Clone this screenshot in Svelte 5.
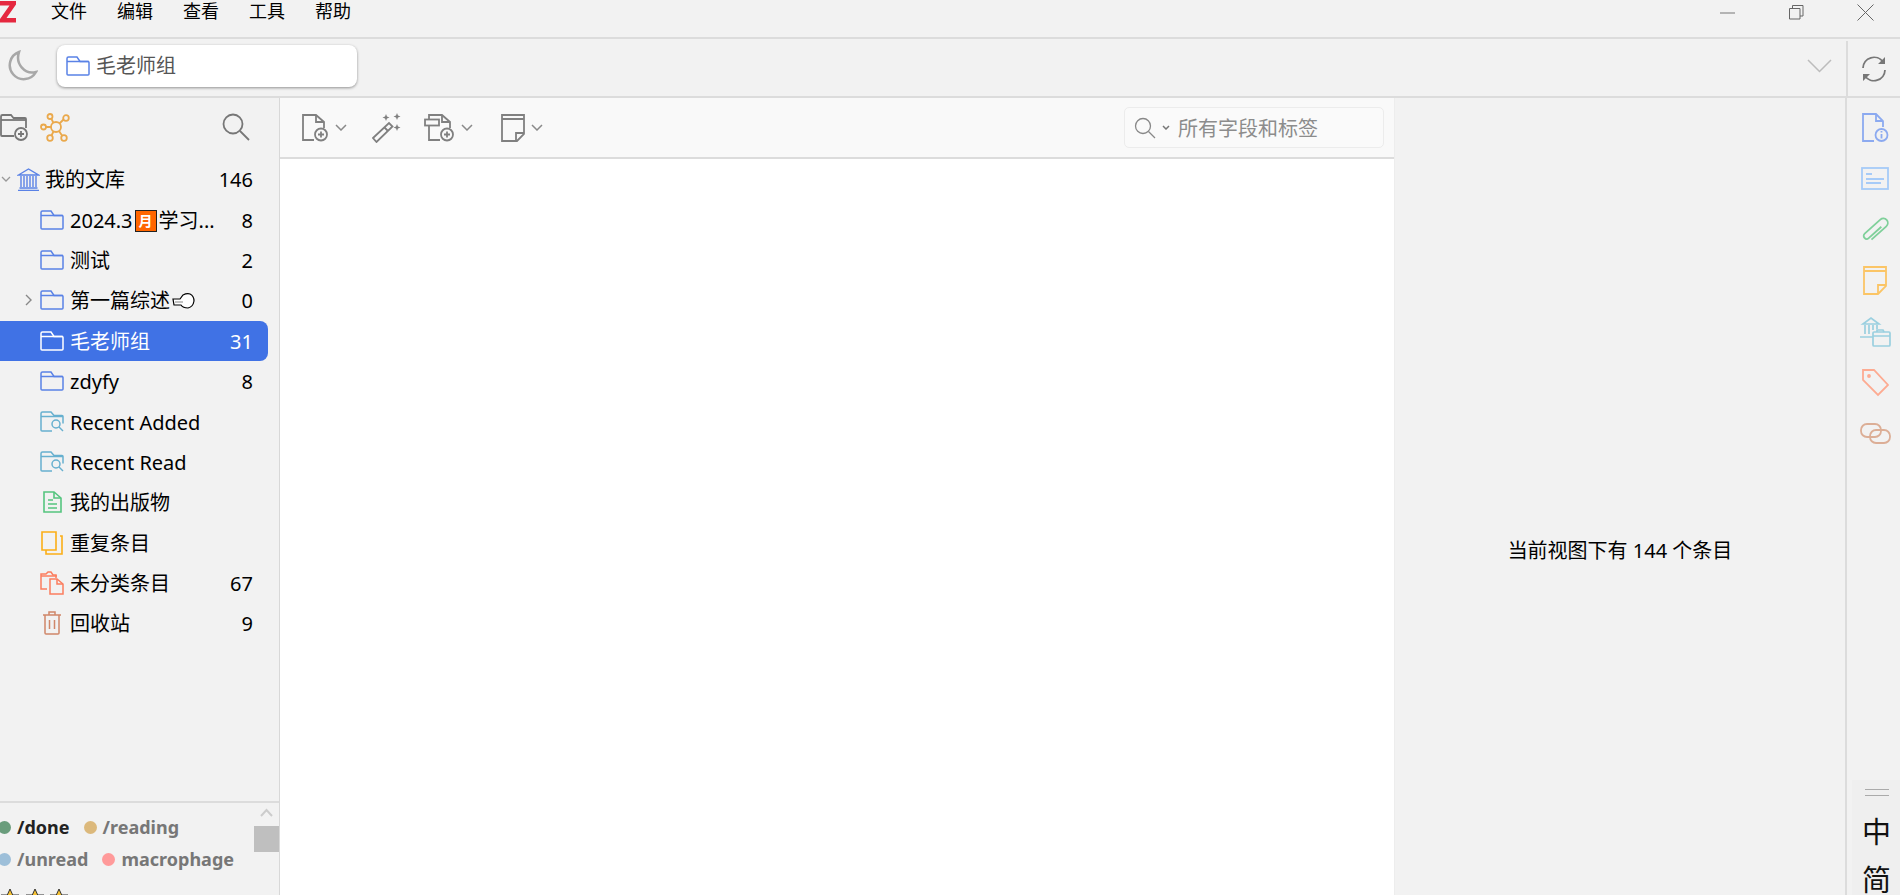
<script>
  const menus = ['文件', '编辑', '查看', '工具', '帮助'];
  const rows = [
    { icon: 'folder', label: '2024.3', badge: '月', after: '学习...', count: 8 },
    { icon: 'folder', label: '测试', count: 2 },
    { icon: 'folder', label: '第一篇综述', hand: true, twisty: true, count: 0 },
    { icon: 'folder', label: '毛老师组', count: 31, selected: true },
    { icon: 'folder', label: 'zdyfy', count: 8 },
    { icon: 'saved', label: 'Recent Added' },
    { icon: 'saved', label: 'Recent Read' },
    { icon: 'pubs', label: '我的出版物' },
    { icon: 'dupes', label: '重复条目' },
    { icon: 'unfiled', label: '未分类条目', count: 67 },
    { icon: 'trash', label: '回收站', count: 9 }
  ];
</script>

{#snippet folder(color)}
  <svg class="ico" width="24" height="20" viewBox="0 0 24 20" fill="none" stroke={color} stroke-width="1.5">
    <path d="M1 5.500V2.500A1.500 1.500 0 0 1 2.500 1H11l3 4.500H22a1 1 0 0 1 1 1V18a1 1 0 0 1-1 1H2a1 1 0 0 1-1-1z" />
    <path d="M1 5.500h22" />
  </svg>
{/snippet}

{#snippet chevron()}
  <svg class="chev" width="12" height="7" viewBox="0 0 12 7" fill="none" stroke="#8a8a8a" stroke-width="1.500"><path d="M1 1l5 5 5-5" /></svg>
{/snippet}

{#snippet rowIcon(row)}
  {#if row.icon === 'folder'}
    {@render folder(row.selected ? '#fff' : '#5a82e6')}
  {:else if row.icon === 'saved'}
    <svg class="ico" width="24" height="22" viewBox="0 0 24 22" fill="none" stroke="#67b0cf" stroke-width="1.500">
      <path d="M12 20H2a1 1 0 0 1-1-1V2.500A1.500 1.500 0 0 1 2.500 1H11l3 3.500H22a1 1 0 0 1 1 1v7" />
      <path d="M1 5.500h22" />
      <circle cx="16" cy="13" r="4" />
      <path d="M19 16l4 4" />
    </svg>
  {:else if row.icon === 'pubs'}
    <svg class="ico" width="24" height="22" viewBox="0 0 24 22" fill="none" stroke="#55c57f" stroke-width="1.600">
      <path d="M4 1h10l7 6v14H4z" />
      <path d="M14 1v6h7M8 9h5M8 13h9M8 17h9" />
    </svg>
  {:else if row.icon === 'dupes'}
    <svg class="ico" width="24" height="24" viewBox="0 0 24 24" fill="none" stroke="#fbae17" stroke-width="1.600">
      <path d="M2 1h14v18H2z" />
      <path d="M20 5h2v18H6v-4" />
    </svg>
  {:else if row.icon === 'unfiled'}
    <svg class="ico" width="24" height="24" viewBox="0 0 24 24" fill="none" stroke="#fb7e5f" stroke-width="1.500">
      <path d="M7 18H1V3h5l2 -2h3l2 3h3v3" />
      <path d="M1 5h16" />
      <path d="M10 8h7l6 5v10H10z" />
      <path d="M17 8v5h6" />
    </svg>
  {:else if row.icon === 'trash'}
    <svg class="ico" width="24" height="24" viewBox="0 0 24 24" fill="none" stroke="#d0876a" stroke-width="1.500">
      <path d="M3 4h18M9 4V1h6v3M5 4v18a1 1 0 0 0 1 1h12a1 1 0 0 0 1-1V4" />
      <path d="M9.500 9v9M14.500 9v9" />
    </svg>
  {/if}
{/snippet}

<div class="app">
  <header class="menubar">
    <svg class="logo" width="17" height="23" viewBox="0 0 17 23"><path fill="#e5283f" d="M0 1h16v3.500L6.500 18h9.500v4.500H0V19L9.500 5.500H0z" /></svg>
    <nav class="menus">
      {#each menus as m}<span>{m}</span>{/each}
    </nav>
    <div class="winbtns">
      <svg width="16" height="2" viewBox="0 0 16 2"><path d="M0 1h15" stroke="#777" stroke-width="1" /></svg>
      <svg width="15" height="15" viewBox="0 0 15 15" fill="none" stroke="#666"><path d="M.5 3.500h10.500v10.500H.5zM3.500 3.500V.5h10.500v10.500h-3" /></svg>
      <svg width="17" height="17" viewBox="0 0 17 17" fill="none" stroke="#666"><path d="M.5.5l16 16M16.500.5l-16 16" /></svg>
    </div>
  </header>

  <div class="tabbar">
    <svg class="moon" width="32" height="32" viewBox="0 0 32 32" fill="none" stroke="#a8a8a8" stroke-width="2.500"><path d="M13 2a14 14 0 1 0 17 20C19 25 9 14 13 2z" /></svg>
    <div class="tab">
      {@render folder('#5a82e6')}
      <span>毛老师组</span>
    </div>
    <svg class="tabs-chev" width="25" height="14" viewBox="0 0 25 14" fill="none" stroke="#bcbcbc" stroke-width="1.500"><path d="M1 1l11.500 11.500L24 1" /></svg>
    <div class="sync">
      <svg width="26" height="26" viewBox="0 0 26 26" fill="none" stroke="#777" stroke-width="1.800">
        <path d="M2 12a11 11 0 0 1 20-6" />
        <path d="M24 14a11 11 0 0 1-20 6" />
        <path fill="#777" stroke="none" d="M24 1v7h-7zM2 25v-7h7z" />
      </svg>
    </div>
  </div>

  <div class="main">
    <aside class="sidebar">
      <div class="side-tools">
        <svg width="29" height="28" viewBox="0 0 29 28" fill="none" stroke="#777" stroke-width="1.800">
          <path d="M14 23H2a1 1 0 0 1-1-1V3.500A1.500 1.500 0 0 1 2.500 2H11l2.500 3H25a1 1 0 0 1 1 1v9" />
          <path d="M1 7h25" />
          <circle cx="21" cy="21" r="6" />
          <path d="M21 18v6M18 21h6" />
        </svg>
        <svg class="net" width="31" height="29" viewBox="0 0 31 29" fill="none" stroke="#eaa94c" stroke-width="1.800">
          <circle cx="16" cy="14" r="5" /><circle cx="10" cy="3.500" r="2.500" /><circle cx="26" cy="5" r="2.800" />
          <circle cx="3.500" cy="14" r="2.500" /><circle cx="10" cy="25" r="2.800" /><circle cx="24" cy="25" r="2.800" />
          <path d="M11.500 6l2 4M23.500 6.500l-4 4M6 14h5M11.500 22.500l2-4M22 22.500l-3-4.500" />
        </svg>
        <svg class="find" width="28" height="28" viewBox="0 0 28 28" fill="none" stroke="#777" stroke-width="1.800"><circle cx="11" cy="11" r="9.500" /><path d="M18 18l9 9" /></svg>
      </div>

      <div class="tree">
        <div class="row lib">
          <svg class="twist-open" width="10" height="6" viewBox="0 0 10 6" fill="none" stroke="#999" stroke-width="1.300"><path d="M1 1l4 4 4-4" /></svg>
          <svg class="ico" width="23" height="23" viewBox="0 0 23 23" fill="none" stroke="#5a82e6" stroke-width="1.400">
            <path d="M1.500 7L11.500 1l10 6zM1 22.500h21M2.500 20h18M4 8v11M7 8v11M10 8v11M13 8v11M16 8v11M19 8v11" />
          </svg>
          <span class="label">我的文库</span>
          <span class="count">146</span>
        </div>
        {#each rows as row}
          <div class="row" class:selected={row.selected}>
            {#if row.twisty}
              <svg class="twist" width="7" height="12" viewBox="0 0 7 12" fill="none" stroke="#888" stroke-width="1.400"><path d="M1 1l5 5-5 5" /></svg>
            {/if}
            <span class="icon-slot">{@render rowIcon(row)}</span>
            <span class="label">
              {row.label}{#if row.badge}<b class="badge">{row.badge}</b>{/if}{#if row.after}{row.after}{/if}{#if row.hand}<svg class="hand" width="23" height="16" viewBox="0 0 23 16" fill="#fff" stroke="#000" stroke-width="1.200"><path d="M1 6h7l3-4q4-2 7-1q4 2 4 7q-1 6-6 7q-5 0-7-3H2z" /><path d="M3 9h8" stroke="#999" /></svg>{/if}
            </span>
            {#if row.count !== undefined}<span class="count">{row.count}</span>{/if}
          </div>
        {/each}
      </div>

      <div class="tags">
        <div class="tag-list">
          <div class="tag-row">
            <i class="dot" style="background:#6a9d7c"></i><span class="tag on">/done</span>
            <i class="dot" style="background:#dcb97c"></i><span class="tag">/reading</span>
          </div>
          <div class="tag-row">
            <i class="dot" style="background:#9dbfd9"></i><span class="tag">/unread</span>
            <i class="dot" style="background:#ff9a9a"></i><span class="tag">macrophage</span>
          </div>
          <div class="stars">
            {#each [0, 1, 2] as s}
              <svg width="20" height="20" viewBox="0 0 20 20" fill="#f5c132" stroke="#333" stroke-width="1"><path d="M10 1l2.700 6H19l-5 4.500 1.800 7L10 15l-5.800 3.500 1.800-7L1 7h6.300z" /></svg>
            {/each}
          </div>
        </div>
        <div class="scroll">
          <svg width="13" height="9" viewBox="0 0 13 9" fill="none" stroke="#ccc" stroke-width="2"><path d="M1 8l5.500-6L12 8" /></svg>
          <div class="thumb"></div>
        </div>
      </div>
    </aside>

    <section class="center">
      <div class="toolbar">
        <svg width="27" height="28" viewBox="0 0 27 28" fill="none" stroke="#808080" stroke-width="1.800">
          <path d="M12 26H1V1h13l8 7v6" /><path d="M14 1v7h8" />
          <circle cx="19" cy="20.500" r="6" fill="#f9f9f9" /><path d="M19 17.500v6M16 20.500h6" />
        </svg>
        {@render chevron()}
        <svg class="wand" width="30" height="30" viewBox="0 0 30 30" fill="none" stroke="#808080" stroke-width="1.800">
          <path d="M1 25l16-15 3.500 3.500L4.500 29z" /><path d="M12.500 14.500l3.500 3.500" />
          <path fill="#808080" stroke="none" d="M14 1l1 2.500 2.500 1-2.500 1-1 2.500-1-2.500-2.500-1 2.500-1zM25 0l1 2.500 2.500 1-2.500 1-1 2.500-1-2.500-2.500-1 2.500-1zM25 11l1 2.500 2.500 1-2.500 1-1 2.500-1-2.500-2.500-1 2.500-1z" />
        </svg>
        <svg class="attach" width="31" height="28" viewBox="0 0 31 28" fill="none" stroke="#808080" stroke-width="1.800">
          <path d="M16 26H5V1h13l8 7v6" /><path d="M18 1v7h8" />
          <rect x="1" y="5.500" width="14" height="6" fill="#f9f9f9" />
          <circle cx="23" cy="20.500" r="6" fill="#f9f9f9" /><path d="M23 17.500v6M20 20.500h6" />
        </svg>
        {@render chevron()}
        <svg class="note" width="24" height="28" viewBox="0 0 24 28" fill="none" stroke="#808080" stroke-width="1.800">
          <path d="M1 1h22v19l-7 7H1z" /><path d="M1 5h22M23 19h-8v8" />
        </svg>
        {@render chevron()}
        <div class="search">
          <svg width="22" height="22" viewBox="0 0 22 22" fill="none" stroke="#888" stroke-width="1.300"><circle cx="9" cy="9" r="7.500" /><path d="M14.500 14.500L21 21" /></svg>
          <svg class="mini" width="8" height="5" viewBox="0 0 8 5" fill="none" stroke="#777" stroke-width="1.500"><path d="M1 1l3 3 3-3" /></svg>
          <span>所有字段和标签</span>
        </div>
      </div>
      <div class="items"></div>
    </section>

    <section class="pane">当前视图下有 144 个条目</section>

    <aside class="rail">
      <div class="slot">
        <svg width="27" height="30" viewBox="0 0 27 30" fill="none" stroke="#8caaf0" stroke-width="1.800">
          <path d="M12 28H1V1h13l7 7v6" /><path d="M14 1v7h7" />
          <circle cx="19.500" cy="22" r="6" /><path d="M19.500 21v4.500M19.500 18v1.500" />
        </svg>
      </div>
      <div class="slot">
        <svg width="28" height="23" viewBox="0 0 28 23" fill="none" stroke="#a6cbf8" stroke-width="1.800">
          <rect x="1" y="1" width="26" height="21" /><path d="M5 7h6M5 12h18M5 16h15" />
        </svg>
      </div>
      <div class="slot">
        <svg width="27" height="26" viewBox="0 0 27 26" fill="none" stroke="#7fd09a" stroke-width="1.800">
          <g transform="rotate(-42 13.500 13) translate(0 1.500)"><path d="M4 16H24a4.500 4.500 0 0 0 0-9H3a3 3 0 0 0 0 6H20" /></g>
        </svg>
      </div>
      <div class="slot">
        <svg width="24" height="29" viewBox="0 0 24 29" fill="none" stroke="#fbc566" stroke-width="1.800">
          <path d="M1 1h22v19l-8 8H1z" /><path d="M1 5h22M23 19h-8v8" />
        </svg>
      </div>
      <div class="slot">
        <svg width="31" height="31" viewBox="0 0 31 31" fill="none" stroke="#9bd0e0" stroke-width="1.700">
          <path d="M3 8l8-6 8 6zM0 21h13M5 9v9M9 9v9M13 9v5M17 9v4" />
          <rect x="13" y="16" width="17" height="14" rx="1" fill="#f2f2f2" /><path d="M13 20h17M17 16v-2h6l1 2" />
        </svg>
      </div>
      <div class="slot">
        <svg width="27" height="28" viewBox="0 0 27 28" fill="none" stroke="#fdab92" stroke-width="1.800">
          <path d="M1 1h11l14 15-10 10L1 11z" /><circle cx="7" cy="7" r="1" fill="#fdab92" />
        </svg>
      </div>
      <div class="slot">
        <svg width="31" height="21" viewBox="0 0 31 21" fill="none" stroke="#dcae96" stroke-width="1.800">
          <rect x="1" y="1" width="20" height="13" rx="6" />
          <rect x="10" y="7" width="20" height="13" rx="6" />
        </svg>
      </div>
      <div class="ime">
        <div class="grip"></div>
        <span>中</span>
        <span>简</span>
      </div>
    </aside>
  </div>
</div>

<style>
  :global(body) {
    margin: 0;
    background: #f2f2f2;
  }
  .app {
    display: flex;
    flex-direction: column;
    height: 895px;
    overflow: hidden;
    font-family: "Noto Sans", "Noto Sans CJK SC", sans-serif;
    font-size: 20px;
    color: #000;
    background: #f2f2f2;
  }

  /* top menu */
  .menubar {
    display: flex;
    align-items: flex-start;
    height: 39px;
    flex: none;
    border-bottom: 2px solid #dcdcdc;
    box-sizing: border-box;
  }
  .logo {
    flex: none;
  }
  .menus {
    display: flex;
    gap: 30px;
    margin-left: 34px;
    font-size: 18px;
    line-height: 23px;
  }
  .winbtns {
    display: flex;
    align-items: center;
    margin-left: auto;
    gap: 53px;
    padding: 4px 26px 0 0;
    height: 17px;
  }

  /* tabs */
  .tabbar {
    display: flex;
    align-items: center;
    height: 59px;
    flex: none;
    padding-bottom: 3px;
    border-bottom: 2px solid #dcdcdc;
    box-sizing: border-box;
  }
  .moon {
    margin-left: 6px;
    flex: none;
  }
  .tab {
    display: flex;
    align-items: center;
    gap: 6px;
    width: 300px;
    height: 42px;
    margin-left: 19px;
    padding-left: 9px;
    box-sizing: border-box;
    background: #fff;
    border-radius: 8px;
    color: #555;
    box-shadow: 0 1px 3px rgba(0, 0, 0, 0.4);
    line-height: 26px;
  }
  .tabs-chev {
    margin-left: auto;
    margin-right: 14px;
  }
  .sync {
    display: flex;
    justify-content: center;
    align-items: center;
    align-self: flex-end;
    width: 54px;
    height: 55px;
    margin-bottom: -3px;
    border-left: 2px solid #dcdcdc;
    box-sizing: border-box;
  }

  .main {
    display: flex;
    flex: 1;
    min-height: 0;
  }

  /* left side */
  .sidebar {
    display: flex;
    flex-direction: column;
    width: 280px;
    flex: none;
    border-right: 1px solid #d8d8d8;
    box-sizing: border-box;
  }
  .side-tools {
    display: flex;
    align-items: center;
    height: 60px;
    flex: none;
    padding-bottom: 2px;
    box-sizing: border-box;
  }
  .net {
    margin-left: 11px;
  }
  .find {
    margin-left: auto;
    margin-right: 29px;
  }
  .tree {
    flex: 1;
    padding-top: 1px;
  }
  .row {
    display: flex;
    align-items: center;
    position: relative;
    height: 40.4px;
    width: 268px;
    padding: 0 15px 0 40px;
    box-sizing: border-box;
    line-height: 26px;
    white-space: nowrap;
  }
  .row.lib {
    padding-left: 17px;
  }
  .row.lib .label {
    margin-left: 5px;
  }
  .row.selected {
    background: #4072e5;
    color: #fff;
    border-radius: 0 8px 8px 0;
  }
  .twist,
  .twist-open {
    position: absolute;
    top: 50%;
    transform: translateY(-50%);
  }
  .twist {
    left: 25px;
  }
  .twist-open {
    left: 1px;
  }
  .ico {
    display: block;
    flex: none;
  }
  .icon-slot {
    display: flex;
    justify-content: center;
    width: 24px;
    flex: none;
  }
  .label {
    display: flex;
    align-items: center;
    margin-left: 6px;
    padding-top: 2px;
    flex: 1;
  }
  .badge {
    display: inline-flex;
    justify-content: center;
    align-items: center;
    width: 22px;
    height: 22px;
    margin: 0 2px;
    background: #ff6600;
    border: 1px solid #222;
    box-sizing: border-box;
    color: #fff;
    font-size: 14px;
    font-weight: 700;
  }
  .hand {
    margin-left: 2px;
  }
  .count {
    margin-left: auto;
    padding-top: 2px;
  }

  /* tags */
  .tags {
    display: flex;
    height: 94px;
    flex: none;
    border-top: 2px solid #dcdcdc;
    box-sizing: border-box;
    overflow: hidden;
  }
  .tag-list {
    flex: 1;
    margin-left: -2px;
    padding-top: 8px;
    font-size: 18px;
    font-weight: 700;
    color: #777;
    line-height: 32px;
  }
  .tag-row {
    display: flex;
    align-items: center;
    height: 32px;
  }
  .dot {
    width: 13px;
    height: 13px;
    border-radius: 50%;
    flex: none;
    margin-right: 6px;
  }
  .tag {
    margin-right: 14px;
  }
  .tag.on {
    color: #222;
  }
  .stars {
    display: flex;
    gap: 4.5px;
    margin: 13px 0 0 2px;
  }
  .scroll {
    display: flex;
    flex-direction: column;
    align-items: center;
    width: 25px;
    flex: none;
    padding-top: 5px;
  }
  .thumb {
    width: 25px;
    height: 26px;
    margin-top: 9px;
    background: #bfbfbf;
  }

  /* center */
  .center {
    display: flex;
    flex-direction: column;
    width: 1114px;
    flex: none;
    background: #fff;
  }
  .toolbar {
    display: flex;
    align-items: center;
    height: 61px;
    flex: none;
    padding-left: 22px;
    background: #f9f9f9;
    border-bottom: 2px solid #dcdcdc;
    box-sizing: border-box;
  }
  .chev {
    margin-left: 6px;
  }
  .wand {
    margin-left: 25px;
  }
  .attach {
    margin-left: 22px;
  }
  .note {
    margin-left: 28px;
  }
  .toolbar .chev {
    margin-top: -1px;
  }
  .search {
    display: flex;
    align-items: center;
    width: 260px;
    height: 41px;
    margin-left: auto;
    margin-right: 10px;
    padding-left: 9px;
    box-sizing: border-box;
    background: #fafafa;
    border: 1px solid #ececec;
    border-radius: 5px;
    color: #8c8c8c;
  }
  .mini {
    margin-left: 6px;
    margin-right: 8px;
  }
  .items {
    flex: 1;
  }

  /* right pane */
  .pane {
    display: flex;
    justify-content: center;
    align-items: center;
    flex: 1;
    padding-top: 106px;
    border-left: 1px solid #ededed;
    box-sizing: border-box;
  }
  .rail {
    display: flex;
    flex-direction: column;
    align-items: center;
    width: 55px;
    flex: none;
    padding: 4px 0 0 3px;
    border-left: 2px solid #dcdcdc;
    box-sizing: border-box;
  }
  .slot {
    display: flex;
    justify-content: center;
    align-items: center;
    height: 51px;
    flex: none;
  }
  .ime {
    display: flex;
    flex-direction: column;
    align-items: center;
    width: 49px;
    height: 115px;
    margin-top: auto;
    padding-top: 9px;
    margin-left: 3px;
    box-sizing: border-box;
    background: #efefef;
    font-size: 29px;
    line-height: 34px;
    color: #111;
  }
  .ime span + span {
    margin-top: 14px;
  }
  .grip {
    width: 24px;
    height: 5px;
    border-top: 1px solid #aaa;
    border-bottom: 1px solid #aaa;
    margin-bottom: 19px;
    flex: none;
  }
</style>
